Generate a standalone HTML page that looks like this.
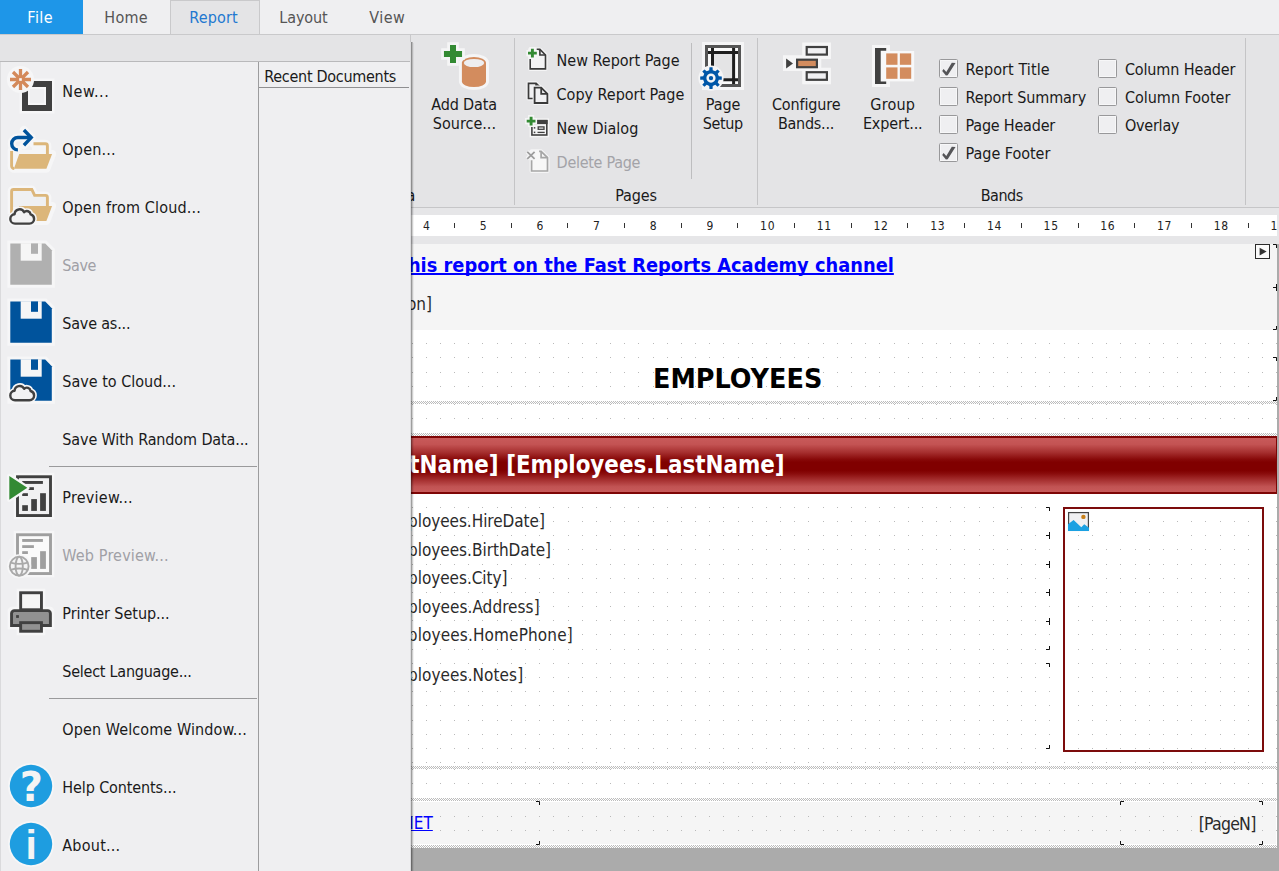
<!DOCTYPE html>
<html lang="en"><head><meta charset="utf-8"><title>FastReport Designer</title>
<style>
html,body{margin:0;padding:0}
body{width:1279px;height:871px;overflow:hidden;position:relative;background:#e6e6e8;font-family:"DejaVu Sans Condensed", "Liberation Sans", sans-serif;font-size:16px;color:#1a1a1a}
.t{position:absolute;white-space:pre;display:block}
.abs{position:absolute}
.bw{font-family:"DejaVu Sans","Liberation Sans",sans-serif}
svg{position:absolute;overflow:visible}
#tabs{position:absolute;left:0;top:0;width:1279px;height:34px;background:#efeff1}
#ribbon{position:absolute;left:0;top:34px;width:1279px;height:172px;background:#e4e4e6;border-top:1px solid #c9c9cb;border-bottom:1px solid #c6c6c8;box-sizing:content-box}
.vsep{position:absolute;width:1px;background:#c4c4c6}
.cb{position:absolute;width:17px;height:17px;border:1px solid #98989a;border-radius:1.5px;background:#efeff1;box-shadow:inset 0 0 0 1px #f7f7f8}
#design{position:absolute;left:0;top:208px;width:1279px;height:663px;background:#e6e6e8;overflow:hidden}
.hatch{position:absolute;left:0;width:1277px;height:3px;background:repeating-conic-gradient(#bcbcbc 0% 25%,#fff 0% 50%) 0 0/2px 2px}
#menu{position:absolute;left:0;top:34px;width:410px;height:837px;background:#efeff1}
</style></head><body>

<div id="tabs">
<div class="abs" style="left:0;top:0;width:83px;height:34px;background:#1e96e8"></div>
<div class="abs" style="left:170px;top:0;width:90px;height:34px;background:#e4e4e6;border:1px solid #c9c9cb;border-bottom:none;box-sizing:border-box"></div>
<span id="t1" class="t " style="top:8.46px;font-size:16px;line-height:20px;color:#ffffff;letter-spacing:0.472px;left:27.30px;">File</span>
<span id="t2" class="t " style="top:8.46px;font-size:16px;line-height:20px;color:#555555;letter-spacing:0.295px;left:104.30px;">Home</span>
<span id="t3" class="t " style="top:8.46px;font-size:16px;line-height:20px;color:#2278d0;letter-spacing:0.152px;left:189.30px;">Report</span>
<span id="t4" class="t " style="top:8.46px;font-size:16px;line-height:20px;color:#555555;letter-spacing:-0.104px;left:279.30px;">Layout</span>
<span id="t5" class="t " style="top:8.46px;font-size:16px;line-height:20px;color:#555555;letter-spacing:0.425px;left:369.30px;">View</span>
</div>
<div id="ribbon"></div>
<div class="vsep" style="left:514px;top:38px;height:167px"></div>
<div class="vsep" style="left:757px;top:38px;height:167px"></div>
<div class="vsep" style="left:1245px;top:38px;height:167px"></div>
<div class="vsep" style="left:691px;top:43px;height:136px;background:#bdbdbf"></div>
<span id="t6" class="t " style="top:94.96px;font-size:16px;line-height:20px;color:#1a1a1a;letter-spacing:-0.154px;left:431.30px;">Add Data</span>
<span id="t7" class="t " style="top:113.96px;font-size:16px;line-height:20px;color:#1a1a1a;letter-spacing:0.009px;left:432.80px;">Source...</span>
<span id="t8" class="t " style="top:94.96px;font-size:16px;line-height:20px;color:#1a1a1a;letter-spacing:-0.060px;left:705.80px;">Page</span>
<span id="t9" class="t " style="top:113.96px;font-size:16px;line-height:20px;color:#1a1a1a;letter-spacing:-0.377px;left:702.80px;">Setup</span>
<span id="t10" class="t " style="top:94.96px;font-size:16px;line-height:20px;color:#1a1a1a;letter-spacing:-0.119px;left:771.90px;">Configure</span>
<span id="t11" class="t " style="top:113.96px;font-size:16px;line-height:20px;color:#1a1a1a;letter-spacing:-0.253px;left:777.90px;">Bands...</span>
<span id="t12" class="t " style="top:94.96px;font-size:16px;line-height:20px;color:#1a1a1a;letter-spacing:0.201px;left:870.30px;">Group</span>
<span id="t13" class="t " style="top:113.96px;font-size:16px;line-height:20px;color:#1a1a1a;letter-spacing:-0.134px;left:862.90px;">Expert...</span>
<span id="t14" class="t " style="top:50.86px;font-size:16px;line-height:20px;color:#1a1a1a;letter-spacing:-0.005px;left:556.60px;">New Report Page</span>
<span id="t15" class="t " style="top:84.96px;font-size:16px;line-height:20px;color:#1a1a1a;letter-spacing:-0.025px;left:556.60px;">Copy Report Page</span>
<span id="t16" class="t " style="top:118.76px;font-size:16px;line-height:20px;color:#1a1a1a;letter-spacing:-0.014px;left:556.60px;">New Dialog</span>
<span id="t17" class="t " style="top:152.76px;font-size:16px;line-height:20px;color:#a3a3a8;letter-spacing:-0.286px;left:556.60px;">Delete Page</span>
<span id="t18" class="t " style="top:186.46px;font-size:16px;line-height:20px;color:#1a1a1a;letter-spacing:-0.145px;left:615.30px;">Pages</span>
<span id="t19" class="t " style="top:186.46px;font-size:16px;line-height:20px;color:#1a1a1a;letter-spacing:-0.467px;left:980.70px;">Bands</span>
<span id="t20" class="t " style="top:186.46px;font-size:16px;line-height:20px;color:#1a1a1a;right:863.80px;width:max-content;">Data</span>
<div class="cb" style="left:939px;top:59px"><svg style="left:0;top:0" width="17" height="17" viewBox="0 0 17 17"><path d="M2.2 10.9 L3.6 8.9 L6.3 12 L11.8 2.7 L15.5 3 L7.7 15.2 L5.9 15.5 Z" fill="#555558"/></svg></div>
<span id="t21" class="t " style="top:60.46px;font-size:16px;line-height:20px;color:#1a1a1a;letter-spacing:0.089px;left:965.60px;">Report Title</span>
<div class="cb" style="left:939px;top:87px"></div>
<span id="t22" class="t " style="top:88.46px;font-size:16px;line-height:20px;color:#1a1a1a;letter-spacing:-0.091px;left:965.60px;">Report Summary</span>
<div class="cb" style="left:939px;top:115px"></div>
<span id="t23" class="t " style="top:116.46px;font-size:16px;line-height:20px;color:#1a1a1a;letter-spacing:-0.218px;left:965.60px;">Page Header</span>
<div class="cb" style="left:939px;top:143px"><svg style="left:0;top:0" width="17" height="17" viewBox="0 0 17 17"><path d="M2.2 10.9 L3.6 8.9 L6.3 12 L11.8 2.7 L15.5 3 L7.7 15.2 L5.9 15.5 Z" fill="#555558"/></svg></div>
<span id="t24" class="t " style="top:144.46px;font-size:16px;line-height:20px;color:#1a1a1a;letter-spacing:-0.039px;left:965.60px;">Page Footer</span>
<div class="cb" style="left:1098px;top:59px"></div>
<span id="t25" class="t " style="top:60.46px;font-size:16px;line-height:20px;color:#1a1a1a;letter-spacing:-0.127px;left:1124.90px;">Column Header</span>
<div class="cb" style="left:1098px;top:87px"></div>
<span id="t26" class="t " style="top:88.46px;font-size:16px;line-height:20px;color:#1a1a1a;letter-spacing:-0.003px;left:1124.90px;">Column Footer</span>
<div class="cb" style="left:1098px;top:115px"></div>
<span id="t27" class="t " style="top:116.46px;font-size:16px;line-height:20px;color:#1a1a1a;letter-spacing:-0.226px;left:1124.90px;">Overlay</span>
<svg style="left:0;top:0" width="1279" height="210" viewBox="0 0 1279 210" fill="none"><path d="M461.9 62.8 a12.05 5.8 0 0 1 24.1 0 V81.3 a12.05 5.8 0 0 1 -24.1 0 Z" fill="#f5f5f6" stroke="#f5f5f6" stroke-width="6"/><path d="M461.9 62.8 a12.05 5.8 0 0 1 24.1 0 V81.3 a12.05 5.8 0 0 1 -24.1 0 Z" fill="#d38c5e"/><ellipse cx="474" cy="63" rx="10.2" ry="4.1" fill="#eeeef0"/><path d="M450 44.95 h6 v6.05 h6.05 v6 h-6.05 v6.05 h-6 v-6.05 h-6.05 v-6 h6.05 Z" fill="#f5f5f6" stroke="#f5f5f6" stroke-width="5.6" stroke-linejoin="miter"/><path d="M450 44.95 h6 v6.05 h6.05 v6 h-6.05 v6.05 h-6 v-6.05 h-6.05 v-6 h6.05 Z" fill="#338a33"/><path d="M530.2 49.4 H539.9 L545.5 55 V68.9 H530.2 Z" fill="#f5f5f6" stroke="#f5f5f6" stroke-width="4" stroke-linejoin="round"/><path d="M530.2 49.4 H539.9 L545.5 55 V68.9 H530.2 Z" fill="#f3f3f4"/><path d="M536.7 49.4 H539.9 L545.5 55 V68.9 H530.2 V58.9" stroke="#3a3a3a" stroke-width="1.6"/><path d="M539.9 49.4 V55 H545.5" stroke="#3a3a3a" stroke-width="1.6"/><path d="M530.95 48.7 h2.9 v2.95 h2.95 v2.9 h-2.95 v2.95 h-2.9 v-2.95 h-2.95 v-2.9 h2.95 Z" fill="#f5f5f6" stroke="#f5f5f6" stroke-width="3.2" stroke-linejoin="miter"/><path d="M530.95 48.7 h2.9 v2.95 h2.95 v2.9 h-2.95 v2.95 h-2.9 v-2.95 h-2.95 v-2.9 h2.95 Z" fill="#338a33"/><path d="M528.5 83.3 H536.1 L541.5 88.7 V98.5 H528.5 Z" fill="#f5f5f6" stroke="#f5f5f6" stroke-width="4" stroke-linejoin="round"/><path d="M528.5 83.3 H536.1 L541.5 88.7 V98.5 H528.5 Z" fill="#f0f0f2"/><path d="M528.5 83.3 H536.1 L541.5 88.7 V98.5 H528.5 Z" stroke="#3a3a3a" stroke-width="1.7"/><path d="M536.1 83.3 V88.7 H541.5" stroke="#3a3a3a" stroke-width="1.7"/><path d="M534.6 87.6 H541.2 L547.4 93.8 V103 H534.6 Z" fill="#f5f5f6" stroke="#f5f5f6" stroke-width="4" stroke-linejoin="round"/><path d="M534.6 87.6 H541.2 L547.4 93.8 V103 H534.6 Z" fill="#f0f0f2"/><path d="M534.6 87.6 H541.2 L547.4 93.8 V103 H534.6 Z" stroke="#3a3a3a" stroke-width="1.8"/><path d="M541.2 87.6 V93.8 H547.4" stroke="#3a3a3a" stroke-width="1.8"/><rect x="529.6" y="118.4" width="19.5" height="18.9" fill="#f5f5f6"/><rect x="531.9" y="120.7" width="14.9" height="14.3" fill="#f3f3f4" stroke="#404040" stroke-width="1.6"/><rect x="531.1" y="119.9" width="16.5" height="4.2" fill="#404040"/><rect x="538.2" y="126.9" width="5.8" height="2.4" stroke="#404040" stroke-width="1.3"/><rect x="533.8" y="127.1" width="1.5" height="1.5" fill="#404040"/><rect x="533.8" y="131.6" width="1.5" height="1.5" fill="#404040"/><path d="M537.5 132.4 H544.7" stroke="#404040" stroke-width="1.3"/><path d="M529.65 116.7 h2.9 v2.95 h2.95 v2.9 h-2.95 v2.95 h-2.9 v-2.95 h-2.95 v-2.9 h2.95 Z" fill="#f5f5f6" stroke="#f5f5f6" stroke-width="3.2" stroke-linejoin="miter"/><path d="M529.65 116.7 h2.9 v2.95 h2.95 v2.9 h-2.95 v2.95 h-2.9 v-2.95 h-2.95 v-2.9 h2.95 Z" fill="#338a33"/><path d="M531.6 151.3 H541.1 L547.5 157.7 V171 H531.6 Z" fill="#f5f5f6" stroke="#f5f5f6" stroke-width="4" stroke-linejoin="round"/><path d="M531.6 151.3 H541.1 L547.5 157.7 V171 H531.6 Z" fill="#f7f7f7"/><path d="M539.1 151.3 H541.1 L547.5 157.7 V171 H531.6 V160.3" stroke="#a6a6a6" stroke-width="1.7"/><path d="M541.1 151.3 V157.7 H547.5" stroke="#a6a6a6" stroke-width="1.7"/><path d="M527.3 151.8 L534.6 158.8 M534.6 151.8 L527.3 158.8" stroke="#f5f5f6" stroke-width="4.2"/><path d="M527.3 151.8 L534.6 158.8 M534.6 151.8 L527.3 158.8" stroke="#9c9c9c" stroke-width="1.7"/><rect x="702" y="42" width="42" height="48" fill="#f5f5f6"/><rect x="706.5" y="46.5" width="33" height="39" fill="#fafafa" stroke="#555" stroke-width="3"/><rect x="714" y="54" width="18" height="24" fill="#e4e4e5"/><path d="M712.5 48 V84 M733.6 48 V84 M708 52.5 H738 M708 79.7 H738" stroke="#1e1e1e" stroke-width="3"/><circle cx="711" cy="78.1" r="12.6" fill="#f5f5f6"/><path fill-rule="evenodd" d="M709.25 70.29 L709.46 67.31 L712.54 67.31 L712.75 70.29 L715.29 71.35 L717.54 69.38 L719.72 71.56 L717.75 73.81 L718.81 76.35 L721.79 76.56 L721.79 79.64 L718.81 79.85 L717.75 82.39 L719.72 84.64 L717.54 86.82 L715.29 84.85 L712.75 85.91 L712.54 88.89 L709.46 88.89 L709.25 85.91 L706.71 84.85 L704.46 86.82 L702.28 84.64 L704.25 82.39 L703.19 79.85 L700.21 79.64 L700.21 76.56 L703.19 76.35 L704.25 73.81 L702.28 71.56 L704.46 69.38 L706.71 71.35Z M706.40 78.10 a4.6 4.6 0 1 0 9.2 0 a4.6 4.6 0 1 0 -9.2 0Z" fill="#0057a8"/><circle cx="711" cy="78.1" r="2.2" fill="#0057a8"/><path d="M802.2 42.5 H831 V59 H821.3 V67.7 H831 V84.3 H802.2 V71 H783 V55.2 H802.2Z" fill="#f5f5f6"/><rect x="806.7" y="47" width="20.2" height="7.6" fill="#f0f0f2" stroke="#404040" stroke-width="2.2"/><rect x="797.1" y="59.7" width="19.8" height="7.5" fill="#d38c5e" stroke="#404040" stroke-width="2.2"/><rect x="806.7" y="72.2" width="20.2" height="7.6" fill="#f0f0f2" stroke="#404040" stroke-width="2.2"/><path d="M786.1 58.6 L793 63.5 L786.1 68.4 Z" fill="#404040"/><path d="M872 45.1 H890 V51 H914.1 V81.2 H890 V87.1 H872Z" fill="#f5f5f6"/><rect x="881" y="51" width="33.1" height="30.2" fill="#f8f8f9"/><path d="M875 48.1 H886.2 V50.8 H880.7 V81.4 H886.2 V84.1 H875Z" fill="#404040"/><rect x="886.2" y="53.4" width="11.3" height="11.4" fill="#d38c5e"/><rect x="886.2" y="67.4" width="11.3" height="11.4" fill="#d38c5e"/><rect x="899.9" y="53.4" width="11.3" height="11.4" fill="#d38c5e"/><rect x="899.9" y="67.4" width="11.3" height="11.4" fill="#d38c5e"/></svg>
<div id="design">
<div class="abs" style="left:0;top:7px;width:1277px;height:21px;background:#fff"></div>
</div>
<span id="t28" class="t " style="top:219.35px;font-size:12px;line-height:15px;color:#222;left:423.00px;max-width:854.2px;overflow:hidden;">4</span>
<div class="abs" style="left:454px;top:223px;width:1px;height:5px;background:#333"></div>
<span id="t29" class="t " style="top:219.35px;font-size:12px;line-height:15px;color:#222;left:479.70px;max-width:797.5px;overflow:hidden;">5</span>
<div class="abs" style="left:511px;top:223px;width:1px;height:5px;background:#333"></div>
<span id="t30" class="t " style="top:219.35px;font-size:12px;line-height:15px;color:#222;left:536.40px;max-width:740.8px;overflow:hidden;">6</span>
<div class="abs" style="left:567px;top:223px;width:1px;height:5px;background:#333"></div>
<span id="t31" class="t " style="top:219.35px;font-size:12px;line-height:15px;color:#222;left:593.10px;max-width:684.1px;overflow:hidden;">7</span>
<div class="abs" style="left:624px;top:223px;width:1px;height:5px;background:#333"></div>
<span id="t32" class="t " style="top:219.35px;font-size:12px;line-height:15px;color:#222;left:649.80px;max-width:627.4px;overflow:hidden;">8</span>
<div class="abs" style="left:681px;top:223px;width:1px;height:5px;background:#333"></div>
<span id="t33" class="t " style="top:219.35px;font-size:12px;line-height:15px;color:#222;left:706.50px;max-width:570.7px;overflow:hidden;">9</span>
<div class="abs" style="left:737px;top:223px;width:1px;height:5px;background:#333"></div>
<span id="t34" class="t " style="top:219.35px;font-size:12px;line-height:15px;color:#222;left:760.10px;letter-spacing:0.7px;max-width:517.2px;overflow:hidden;">10</span>
<div class="abs" style="left:794px;top:223px;width:1px;height:5px;background:#333"></div>
<span id="t35" class="t " style="top:219.35px;font-size:12px;line-height:15px;color:#222;left:816.80px;letter-spacing:0.7px;max-width:460.5px;overflow:hidden;">11</span>
<div class="abs" style="left:851px;top:223px;width:1px;height:5px;background:#333"></div>
<span id="t36" class="t " style="top:219.35px;font-size:12px;line-height:15px;color:#222;left:873.50px;letter-spacing:0.7px;max-width:403.8px;overflow:hidden;">12</span>
<div class="abs" style="left:907px;top:223px;width:1px;height:5px;background:#333"></div>
<span id="t37" class="t " style="top:219.35px;font-size:12px;line-height:15px;color:#222;left:930.20px;letter-spacing:0.7px;max-width:347.1px;overflow:hidden;">13</span>
<div class="abs" style="left:964px;top:223px;width:1px;height:5px;background:#333"></div>
<span id="t38" class="t " style="top:219.35px;font-size:12px;line-height:15px;color:#222;left:986.90px;letter-spacing:0.7px;max-width:290.4px;overflow:hidden;">14</span>
<div class="abs" style="left:1021px;top:223px;width:1px;height:5px;background:#333"></div>
<span id="t39" class="t " style="top:219.35px;font-size:12px;line-height:15px;color:#222;left:1043.60px;letter-spacing:0.7px;max-width:233.7px;overflow:hidden;">15</span>
<div class="abs" style="left:1078px;top:223px;width:1px;height:5px;background:#333"></div>
<span id="t40" class="t " style="top:219.35px;font-size:12px;line-height:15px;color:#222;left:1100.30px;letter-spacing:0.7px;max-width:177.0px;overflow:hidden;">16</span>
<div class="abs" style="left:1134px;top:223px;width:1px;height:5px;background:#333"></div>
<span id="t41" class="t " style="top:219.35px;font-size:12px;line-height:15px;color:#222;left:1157.00px;letter-spacing:0.7px;max-width:120.3px;overflow:hidden;">17</span>
<div class="abs" style="left:1191px;top:223px;width:1px;height:5px;background:#333"></div>
<span id="t42" class="t " style="top:219.35px;font-size:12px;line-height:15px;color:#222;left:1213.70px;letter-spacing:0.7px;max-width:63.6px;overflow:hidden;">18</span>
<div class="abs" style="left:1248px;top:223px;width:1px;height:5px;background:#333"></div>
<span id="t43" class="t " style="top:219.35px;font-size:12px;line-height:15px;color:#222;left:1270.40px;letter-spacing:0.7px;max-width:6.9px;overflow:hidden;">19</span>
<div class="abs" style="left:0px;top:244px;width:1277px;height:86px;background:#f5f5f5"></div>
<div class="abs" style="left:0px;top:330px;width:1277px;height:71px;background:#fff"></div>
<div class="hatch" style="top:401px"></div>
<div class="abs" style="left:0px;top:404px;width:1277px;height:29px;background:#fff"></div>
<div class="hatch" style="top:433px"></div>
<div class="abs" style="left:0;top:436px;width:1277px;height:58px;box-sizing:border-box;border:2px solid #7e0505;border-right-width:1px;border-left:none;background:linear-gradient(180deg,#c85a5a 0%,#c35353 12%,#a52e2e 27%,#870808 40%,#800000 45%,#800000 60%,#8a0c0c 66%,#a63030 78%,#c15353 90%,#c95b5b 100%)"></div>
<div class="abs" style="left:0px;top:494px;width:1277px;height:272px;background:#fff"></div>
<div class="hatch" style="top:766px"></div>
<div class="abs" style="left:0px;top:769px;width:1277px;height:29px;background:#fff"></div>
<div class="hatch" style="top:798px"></div>
<div class="abs" style="left:0px;top:801px;width:1277px;height:1px;background:#fff"></div>
<div class="abs" style="left:0px;top:802px;width:1276px;height:42px;background:#f5f5f5"></div>
<div class="abs" style="left:1276px;top:802px;width:1px;height:43px;background:#fff"></div>
<div class="abs" style="left:0px;top:844px;width:1277px;height:1px;background:#fff"></div>
<div class="hatch" style="top:845px"></div>
<div class="abs" style="left:0px;top:848px;width:1279px;height:23px;background:#ababab"></div>
<div class="abs" style="left:1277px;top:244px;width:2px;height:604px;background:#ababab"></div>
<svg style="left:0;top:0" width="1277" height="871" viewBox="0 0 1277 871" shape-rendering="crispEdges"><defs><pattern id="dr" x="199" y="0" width="567" height="1" patternUnits="userSpaceOnUse" fill="#b9b9b9"><rect x="0" y="0" width="1" height="1"/><rect x="14" y="0" width="1" height="1"/><rect x="28" y="0" width="1" height="1"/><rect x="42" y="0" width="1" height="1"/><rect x="57" y="0" width="1" height="1"/><rect x="71" y="0" width="1" height="1"/><rect x="85" y="0" width="1" height="1"/><rect x="99" y="0" width="1" height="1"/><rect x="113" y="0" width="1" height="1"/><rect x="128" y="0" width="1" height="1"/><rect x="142" y="0" width="1" height="1"/><rect x="156" y="0" width="1" height="1"/><rect x="170" y="0" width="1" height="1"/><rect x="184" y="0" width="1" height="1"/><rect x="198" y="0" width="1" height="1"/><rect x="213" y="0" width="1" height="1"/><rect x="227" y="0" width="1" height="1"/><rect x="241" y="0" width="1" height="1"/><rect x="255" y="0" width="1" height="1"/><rect x="269" y="0" width="1" height="1"/><rect x="283" y="0" width="1" height="1"/><rect x="298" y="0" width="1" height="1"/><rect x="312" y="0" width="1" height="1"/><rect x="326" y="0" width="1" height="1"/><rect x="340" y="0" width="1" height="1"/><rect x="354" y="0" width="1" height="1"/><rect x="369" y="0" width="1" height="1"/><rect x="383" y="0" width="1" height="1"/><rect x="397" y="0" width="1" height="1"/><rect x="411" y="0" width="1" height="1"/><rect x="425" y="0" width="1" height="1"/><rect x="439" y="0" width="1" height="1"/><rect x="454" y="0" width="1" height="1"/><rect x="468" y="0" width="1" height="1"/><rect x="482" y="0" width="1" height="1"/><rect x="496" y="0" width="1" height="1"/><rect x="510" y="0" width="1" height="1"/><rect x="524" y="0" width="1" height="1"/><rect x="539" y="0" width="1" height="1"/><rect x="553" y="0" width="1" height="1"/></pattern></defs><rect x="400" y="343" width="877" height="1" fill="url(#dr)"/><rect x="400" y="357" width="877" height="1" fill="url(#dr)"/><rect x="400" y="372" width="877" height="1" fill="url(#dr)"/><rect x="400" y="386" width="877" height="1" fill="url(#dr)"/><rect x="400" y="404" width="877" height="1" fill="url(#dr)"/><rect x="400" y="418" width="877" height="1" fill="url(#dr)"/><rect x="400" y="507" width="877" height="1" fill="url(#dr)"/><rect x="400" y="521" width="877" height="1" fill="url(#dr)"/><rect x="400" y="535" width="877" height="1" fill="url(#dr)"/><rect x="400" y="549" width="877" height="1" fill="url(#dr)"/><rect x="400" y="564" width="877" height="1" fill="url(#dr)"/><rect x="400" y="578" width="877" height="1" fill="url(#dr)"/><rect x="400" y="592" width="877" height="1" fill="url(#dr)"/><rect x="400" y="606" width="877" height="1" fill="url(#dr)"/><rect x="400" y="620" width="877" height="1" fill="url(#dr)"/><rect x="400" y="634" width="877" height="1" fill="url(#dr)"/><rect x="400" y="649" width="877" height="1" fill="url(#dr)"/><rect x="400" y="663" width="877" height="1" fill="url(#dr)"/><rect x="400" y="677" width="877" height="1" fill="url(#dr)"/><rect x="400" y="691" width="877" height="1" fill="url(#dr)"/><rect x="400" y="705" width="877" height="1" fill="url(#dr)"/><rect x="400" y="720" width="877" height="1" fill="url(#dr)"/><rect x="400" y="734" width="877" height="1" fill="url(#dr)"/><rect x="400" y="748" width="877" height="1" fill="url(#dr)"/><rect x="400" y="762" width="877" height="1" fill="url(#dr)"/><rect x="400" y="769" width="877" height="1" fill="url(#dr)"/><rect x="400" y="783" width="877" height="1" fill="url(#dr)"/><rect x="400" y="816" width="877" height="1" fill="url(#dr)"/><rect x="400" y="830" width="877" height="1" fill="url(#dr)"/></svg>
<span id="t44" class="t  bw" style="top:252.68px;font-size:20px;line-height:25px;color:#0000ff;font-weight:700;right:385.40px;width:max-content;transform:scaleX(0.8919);transform-origin:right 50%;text-decoration:underline;text-decoration-thickness:2px;text-underline-offset:0.6px;text-decoration-skip-ink:none;">Learn how to create this report on the Fast Reports Academy channel</span>
<span id="t45" class="t " style="top:294.42px;font-size:17px;line-height:21px;color:#2a2a2a;right:847.00px;width:max-content;">[Report.ReportInfo.Description]</span>
<span id="t46" class="t  bw" style="top:361.76px;font-size:26.7px;line-height:33px;color:#000;font-weight:700;left:653.00px;transform:scaleX(0.9557);transform-origin:left 50%;">EMPLOYEES</span>
<span id="t47" class="t  bw" style="top:449.90px;font-size:24px;line-height:30px;color:#fff;font-weight:700;right:494.20px;width:max-content;transform:scaleX(0.8936);transform-origin:right 50%;">[Employees.FirstName] [Employees.LastName]</span>
<span id="t48" class="t " style="top:511.22px;font-size:17px;line-height:21px;color:#2a2a2a;letter-spacing:-0.048px;right:734.15px;width:max-content;">[Employees.HireDate]</span>
<span id="t49" class="t " style="top:539.72px;font-size:17px;line-height:21px;color:#2a2a2a;letter-spacing:-0.009px;right:727.91px;width:max-content;">[Employees.BirthDate]</span>
<span id="t50" class="t " style="top:568.42px;font-size:17px;line-height:21px;color:#2a2a2a;letter-spacing:-0.041px;right:771.54px;width:max-content;">[Employees.City]</span>
<span id="t51" class="t " style="top:596.62px;font-size:17px;line-height:21px;color:#2a2a2a;letter-spacing:0.055px;right:739.35px;width:max-content;">[Employees.Address]</span>
<span id="t52" class="t " style="top:624.82px;font-size:17px;line-height:21px;color:#2a2a2a;letter-spacing:0.136px;right:706.16px;width:max-content;">[Employees.HomePhone]</span>
<span id="t53" class="t " style="top:665.02px;font-size:17px;line-height:21px;color:#2a2a2a;letter-spacing:0.079px;right:755.82px;width:max-content;">[Employees.Notes]</span>
<span id="t54" class="t " style="top:812.62px;font-size:17px;line-height:21px;color:#0000ff;right:846.20px;width:max-content;text-decoration:underline;text-decoration-thickness:1px;text-underline-offset:1px;text-decoration-skip-ink:none;">Generated by FastReport .NET</span>
<span id="t55" class="t " style="top:812.95px;font-size:17.5px;line-height:22px;color:#2a2a2a;letter-spacing:-0.752px;left:1198.70px;">[PageN]</span>
<div class="abs" style="left:1063px;top:507px;width:201px;height:245px;box-sizing:border-box;border:2px solid #7c0c0c"></div>
<svg style="left:1068px;top:512px" width="21" height="19" viewBox="0 0 21 19"><rect x="-1" y="-1" width="23" height="21" fill="#fbfbfb"/><rect x="0.6" y="0.6" width="19.8" height="17.8" fill="#f0f0f2" stroke="#444" stroke-width="1.2"/><path d="M0 19 V12.3 L5.6 8 L13.3 15.2 L16.2 12.3 L21 15.8 V19 Z" fill="#1ba1e2"/><circle cx="15.4" cy="4.9" r="2.2" fill="#c8801a"/></svg>
<svg style="left:1255px;top:244px" width="15" height="15" viewBox="0 0 15 15"><rect x="0.5" y="0.5" width="14" height="14" fill="#fafafa" stroke="#2a2a2a"/><path d="M4.6 3.8 L11.6 7.6 L4.6 11.4 Z" fill="#333"/></svg>
<svg style="left:0;top:0" width="1279" height="871" viewBox="0 0 1279 871" fill="none" stroke="#111" stroke-width="1"><path d="M1273 244.5 h3.5 v3.5"/><path d="M1273 287.5 h3.5 M1276.5 284 v7"/><path d="M1273 329.5 h3.5 v-3.5"/><path d="M1273 357.5 h3.5 v3.5"/><path d="M1273 400.5 h3.5 v-3.5"/><path d="M1046 507.5 h3.5 v3.5"/><path d="M1046 535.5 h3.5 M1049.5 532 v7"/><path d="M1046 564.5 h3.5 M1049.5 561 v7"/><path d="M1046 592.5 h3.5 M1049.5 589 v7"/><path d="M1046 621.5 h3.5 M1049.5 618 v7"/><path d="M1046 649.5 h3.5 v-3.5"/><path d="M1046 663.5 h3.5 v3.5"/><path d="M1046 748.5 h3.5 v-3.5"/><path d="M536 801.5 h3.5 v3.5"/><path d="M536 844.5 h3.5 v-3.5"/><path d="M1120.5 805 v-3.5 h3.5"/><path d="M1120.5 841 v3.5 h3.5"/><path d="M1259 801.5 h3.5 v3.5"/><path d="M1259 844.5 h3.5 v-3.5"/></svg>
<div id="menu">
<div class="abs" style="left:0;top:0;width:410px;height:27px;background:#e4e4e6;border-bottom:1px solid #b9b9bb"></div>
<div class="abs" style="left:0;top:0;width:410px;height:1px;background:#c9c9cb"></div>
<div class="abs" style="left:0;top:28px;width:1px;height:809px;background:#dadadc"></div>
<div class="abs" style="left:258px;top:28px;width:1px;height:809px;background:#9c9c9e"></div>
<div class="abs" style="left:259px;top:53px;width:150px;height:1px;background:#8f8f91"></div>
<div class="abs" style="left:49px;top:432px;width:208px;height:1px;background:#9a9a9c"></div>
<div class="abs" style="left:49px;top:664px;width:208px;height:1px;background:#9a9a9c"></div>
</div>
<div class="abs" style="left:410px;top:34px;width:1px;height:837px;background:#dcdcde"></div>
<div class="abs" style="left:410px;top:34px;width:1px;height:8px;background:#c8c8ca"></div>
<div class="abs" style="left:413px;top:43px;width:1px;height:828px;background:rgba(0,0,0,0.05)"></div>
<div class="abs" style="left:411px;top:42px;width:1px;height:829px;background:rgba(0,0,0,0.38)"></div>
<div class="abs" style="left:412px;top:42px;width:1px;height:829px;background:rgba(0,0,0,0.19)"></div>
<span id="t56" class="t " style="top:67.46px;font-size:16px;line-height:20px;color:#1a1a1a;letter-spacing:-0.289px;left:264.30px;">Recent Documents</span>
<span id="t57" class="t " style="top:82.46px;font-size:16px;line-height:20px;color:#1a1a1a;letter-spacing:0.552px;left:62.30px;">New...</span>
<span id="t58" class="t " style="top:140.46px;font-size:16px;line-height:20px;color:#1a1a1a;letter-spacing:0.205px;left:62.30px;">Open...</span>
<span id="t59" class="t " style="top:198.46px;font-size:16px;line-height:20px;color:#1a1a1a;letter-spacing:0.148px;left:62.30px;">Open from Cloud...</span>
<span id="t60" class="t " style="top:256.46px;font-size:16px;line-height:20px;color:#a0a0a6;letter-spacing:-0.415px;left:62.30px;">Save</span>
<span id="t61" class="t " style="top:314.46px;font-size:16px;line-height:20px;color:#1a1a1a;letter-spacing:-0.193px;left:62.30px;">Save as...</span>
<span id="t62" class="t " style="top:372.46px;font-size:16px;line-height:20px;color:#1a1a1a;letter-spacing:-0.004px;left:62.30px;">Save to Cloud...</span>
<span id="t63" class="t " style="top:430.46px;font-size:16px;line-height:20px;color:#1a1a1a;letter-spacing:-0.128px;left:62.30px;">Save With Random Data...</span>
<span id="t64" class="t " style="top:488.46px;font-size:16px;line-height:20px;color:#1a1a1a;letter-spacing:0.231px;left:62.30px;">Preview...</span>
<span id="t65" class="t " style="top:546.46px;font-size:16px;line-height:20px;color:#a0a0a6;letter-spacing:0.163px;left:62.30px;">Web Preview...</span>
<span id="t66" class="t " style="top:604.46px;font-size:16px;line-height:20px;color:#1a1a1a;letter-spacing:-0.043px;left:62.30px;">Printer Setup...</span>
<span id="t67" class="t " style="top:662.46px;font-size:16px;line-height:20px;color:#1a1a1a;letter-spacing:-0.244px;left:62.30px;">Select Language...</span>
<span id="t68" class="t " style="top:720.46px;font-size:16px;line-height:20px;color:#1a1a1a;letter-spacing:0.099px;left:62.30px;">Open Welcome Window...</span>
<span id="t69" class="t " style="top:778.46px;font-size:16px;line-height:20px;color:#1a1a1a;letter-spacing:-0.111px;left:62.30px;">Help Contents...</span>
<span id="t70" class="t " style="top:836.46px;font-size:16px;line-height:20px;color:#1a1a1a;letter-spacing:0.233px;left:62.30px;">About...</span>
<svg style="left:0;top:0" width="260" height="871" viewBox="0 0 260 871" fill="none"><path fill-rule="evenodd" d="M19.5 78.5h35v35h-35z M30 89v14h14v-14z" fill="#f6f6f7"/><path fill-rule="evenodd" d="M22 81h30v30h-30z M28 87v18h18v-18z" fill="#404040"/><circle cx="20.5" cy="79.5" r="13.6" fill="#f6f6f7"/><path d="M10 79.5h21 M20.5 69v21 M13 72 L28 87 M28 72 L13 87" stroke="#d4895a" stroke-width="3.3"/><rect x="19.2" y="78.2" width="2.6" height="2.6" fill="#fafafa"/><g stroke="#f6f6f7" stroke-width="8" stroke-linejoin="round" stroke-linecap="round"><path d="M19.2 154.1 H52.1 L46.4 168.7 H13.9 Z" fill="#f6f6f7"/><path d="M33.5 143.7 H45.4 a2 2 0 0 1 2 2 V154.5"/><path d="M11.6 151 V166 a2.6 2.6 0 0 0 2.6 2.6"/><path d="M17.9 149.9 a6.2 6.2 0 0 1 0 -12.4 H31.5"/><path d="M23.9 130 L31.2 137.6 L23.9 145.2"/></g><path d="M12 150 H32 V144 H47 V155 H19 L13 168 Z" fill="#f5f5f6"/><path d="M33.5 143.7 H45.4 a2 2 0 0 1 2 2 V154.5" stroke="#dcb67a" stroke-width="2.9"/><path d="M11.6 151 V166 a2.6 2.6 0 0 0 2.6 2.6" stroke="#dcb67a" stroke-width="2.9"/><path d="M19.2 154.1 H52.1 L46.4 168.7 H13.9 Z" fill="#dcb67a"/><path d="M17.9 149.9 a6.2 6.2 0 0 1 0 -12.4 H31.5" stroke="#00539c" stroke-width="3.4"/><path d="M23.9 130 L31.2 137.6 L23.9 145.2" stroke="#00539c" stroke-width="3.4"/><g stroke="#f6f6f7" stroke-width="8" stroke-linejoin="round"><path d="M11.6 214 V191.5 a2 2 0 0 1 2 -2 H31.8 L34.6 195.4 H45.4 a2 2 0 0 1 2 2 V206.5"/><path d="M19.2 206.1 H52.1 L46.4 220.9 H13.9 Z" fill="#f6f6f7"/></g><path d="M12 191 H32 L35 196 H47 V207 H12Z" fill="#eff0f2"/><path d="M11.6 214 V191.5 a2 2 0 0 1 2 -2 H31.8 L34.6 195.4 H45.4 a2 2 0 0 1 2 2 V206.5" stroke="#dcb67a" stroke-width="2.9"/><path d="M19.2 206.1 H52.1 L46.4 220.9 H13.9 Z" fill="#dcb67a"/><g transform="translate(10.3 209)"><path d="M4.7 14.6 A4.7 4.7 0 0 1 0 9.9 A4.7 4.7 0 0 1 4.3 5.2 A5 5 0 0 1 13.8 3.2 A3.8 3.8 0 0 1 20.3 5.4 A4.7 4.7 0 0 1 23.8 9.9 A4.7 4.7 0 0 1 19.1 14.6 Z" fill="#f6f6f7" stroke="#f6f6f7" stroke-width="5.6" stroke-linejoin="round"/><path d="M4.7 14.6 A4.7 4.7 0 0 1 0 9.9 A4.7 4.7 0 0 1 4.3 5.2 A5 5 0 0 1 13.8 3.2 A3.8 3.8 0 0 1 20.3 5.4 A4.7 4.7 0 0 1 23.8 9.9 A4.7 4.7 0 0 1 19.1 14.6 Z" fill="#f2f2f3" stroke="#404040" stroke-width="2.4" stroke-linejoin="round"/></g><path d="M7.3 240.4 H46.4 L54.8 248.8 V287.7 H7.3Z" fill="#f6f6f7"/><path d="M10.3 243.4 H45.2 L51.8 250.2 V284.7 H10.3Z" fill="#b0b0b0"/><rect x="20.7" y="243.2" width="21" height="17.5" fill="#f6f6f6"/><rect x="31" y="243.4" width="7" height="10.4" fill="#b0b0b0"/><path d="M7.3 298.4 H46.4 L54.8 306.8 V345.7 H7.3Z" fill="#f6f6f7"/><path d="M10.3 301.4 H45.2 L51.8 308.2 V342.7 H10.3Z" fill="#00539c"/><rect x="20.7" y="301.2" width="21" height="17.5" fill="#f6f6f6"/><rect x="31" y="301.4" width="7" height="10.4" fill="#00539c"/><path d="M7.3 356.4 H46.4 L54.8 364.8 V403.7 H7.3Z" fill="#f6f6f7"/><path d="M10.3 359.4 H45.2 L51.8 366.2 V400.7 H10.3Z" fill="#00539c"/><rect x="20.7" y="359.2" width="21" height="17.5" fill="#f6f6f6"/><rect x="31" y="359.4" width="7" height="10.4" fill="#00539c"/><g transform="translate(10.3 385.6)"><path d="M4.7 14.6 A4.7 4.7 0 0 1 0 9.9 A4.7 4.7 0 0 1 4.3 5.2 A5 5 0 0 1 13.8 3.2 A3.8 3.8 0 0 1 20.3 5.4 A4.7 4.7 0 0 1 23.8 9.9 A4.7 4.7 0 0 1 19.1 14.6 Z" fill="#f6f6f7" stroke="#f6f6f7" stroke-width="5.6" stroke-linejoin="round"/><path d="M4.7 14.6 A4.7 4.7 0 0 1 0 9.9 A4.7 4.7 0 0 1 4.3 5.2 A5 5 0 0 1 13.8 3.2 A3.8 3.8 0 0 1 20.3 5.4 A4.7 4.7 0 0 1 23.8 9.9 A4.7 4.7 0 0 1 19.1 14.6 Z" fill="#f2f2f3" stroke="#404040" stroke-width="2.4" stroke-linejoin="round"/></g><rect x="13.6" y="472.8" width="40.8" height="46.6" fill="#f6f6f7"/><rect x="17.5" y="476.75" width="33" height="38.8" fill="#f1f1f2" stroke="#404040" stroke-width="2.9"/><g fill="#404040"><rect x="22.2" y="481" width="20.7" height="2.9"/><rect x="22.2" y="487.2" width="11.7" height="2.8"/><rect x="22.2" y="493.2" width="5.7" height="2.8"/><rect x="22.2" y="505.2" width="5.7" height="5.7"/><rect x="31.2" y="499.1" width="5.7" height="11.8"/><rect x="40.1" y="493.2" width="5.8" height="17.7"/></g><path d="M9.3 476 V499.7 L27.3 487.8 Z" fill="#f6f6f7" stroke="#f6f6f7" stroke-width="4.5" stroke-linejoin="round"/><path d="M9.3 476 V499.7 L27.3 487.8 Z" fill="#338a33"/><rect x="13.6" y="530.8" width="40.8" height="46.6" fill="#f6f6f7"/><rect x="17.5" y="534.75" width="33" height="38.8" fill="#fafafa" stroke="#9f9f9f" stroke-width="2.9"/><g fill="#9f9f9f"><rect x="22.2" y="539" width="20.7" height="2.9"/><rect x="22.2" y="545.2" width="11.7" height="2.8"/><rect x="22.2" y="551.2" width="5.7" height="2.8"/><rect x="22.2" y="563.2" width="5.7" height="5.7"/><rect x="31.2" y="557.1" width="5.7" height="11.8"/><rect x="40.1" y="551.2" width="5.8" height="17.7"/></g><circle cx="19.2" cy="566.2" r="12" fill="#f6f6f7"/><g stroke="#a9a9a9" stroke-width="1.9"><circle cx="19.2" cy="566.2" r="9.4" fill="#f3f3f4"/><ellipse cx="19.2" cy="566.2" rx="3.6" ry="9.4"/><path d="M10.6 562.6 Q19.2 565.2 27.8 562.6 M10.6 569.8 Q19.2 567.2 27.8 569.8"/></g><path d="M16.7 588.8 H45.4 V606.7 H50 a4.3 4.3 0 0 1 4.3 4.3 V629.4 H45.4 V635.2 H16.7 V629.4 H7.6 V611 a4.3 4.3 0 0 1 4.3 -4.3 H16.7Z" fill="#f6f6f7"/><g stroke="#404040" stroke-width="2.9"><rect x="20.65" y="592.75" width="20.8" height="17" fill="#f5f5f5"/><path d="M11.55 625.45 V613.4 a2.8 2.8 0 0 1 2.8 -2.8 H47.6 a2.8 2.8 0 0 1 2.8 2.8 V625.45 Z" fill="#919191"/><rect x="20.65" y="622.65" width="20.8" height="8.6" fill="#919191"/></g><rect x="16.1" y="615.1" width="2.8" height="2.8" fill="#404040"/><circle cx="31" cy="786" r="23" fill="#f6f6f7"/><circle cx="31" cy="786" r="21.2" fill="#1e9de0"/><circle cx="31" cy="844" r="23" fill="#f6f6f7"/><circle cx="31" cy="844" r="21.2" fill="#1e9de0"/><text x="31.3" y="801.2" text-anchor="middle" font-family="'DejaVu Sans','Liberation Sans',sans-serif" font-weight="700" font-size="40" fill="#f4f4f4">?</text><text x="31.2" y="859" text-anchor="middle" font-family="'Liberation Sans',sans-serif" font-weight="700" font-size="41" fill="#f4f4f4">i</text></svg>
</body></html>
